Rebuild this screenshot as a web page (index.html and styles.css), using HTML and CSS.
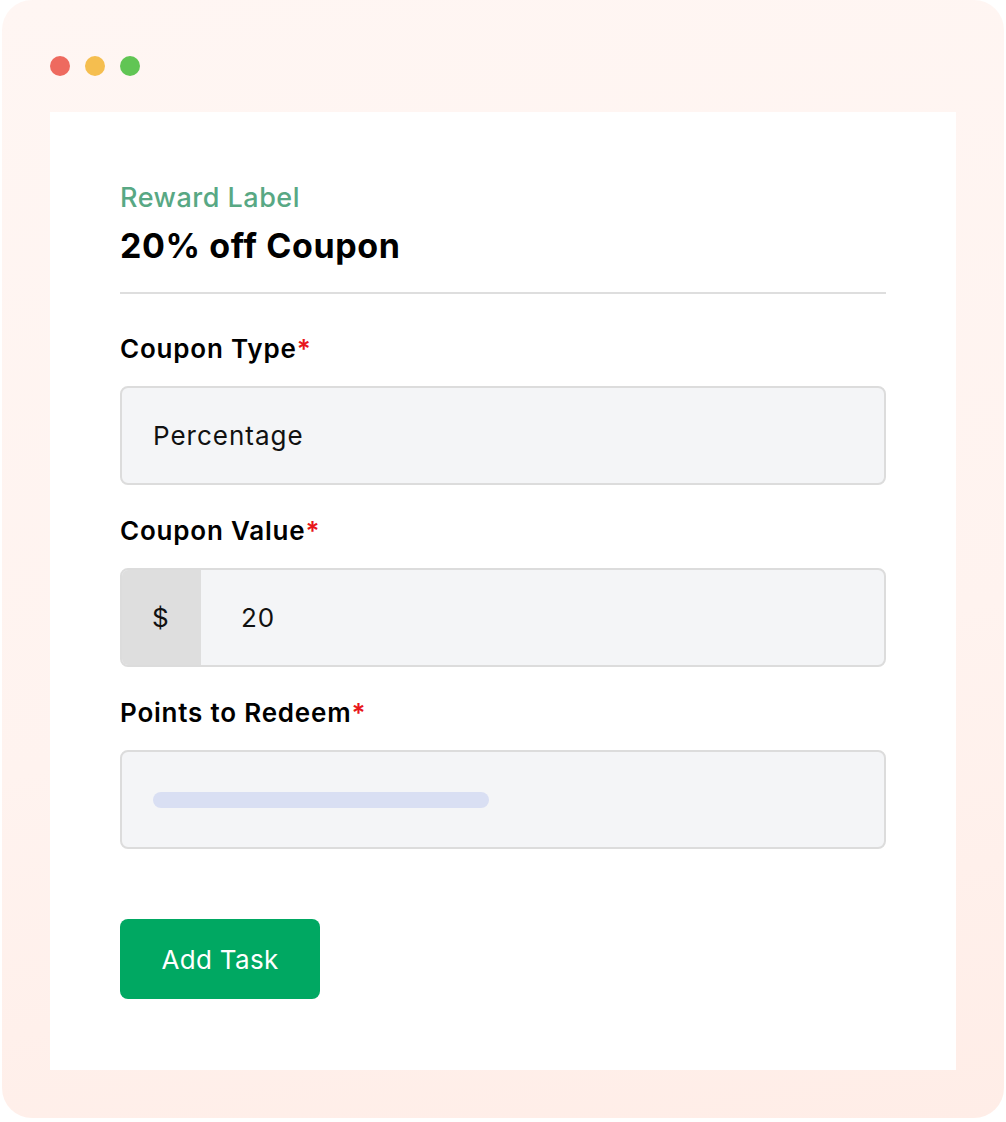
FILE: index.html
```html
<!DOCTYPE html>
<html lang="en">
    <head>
        <meta charset="UTF-8">
        <meta name="viewport" content="width=device-width, initial-scale=1.0">
        <title>Reward Coupon</title>
        <link rel="stylesheet" href="styles.css">
    </head>
    <body>
        <div class="frame">
            <div class="dots">
                <span class="dot red"></span>
                <span class="dot yellow"></span>
                <span class="dot green"></span>
            </div>
            <div class="panel">
                <div class="reward">
                    <p class="reward-label">Reward Label</p>
                    <h2 class="reward-title">20% off Coupon</h2>
                </div>

                <div class="field">
                    <label class="field-label">Coupon Type<span class="req">*</span></label>
                    <div class="input">
                        <span class="input-text">Percentage</span>
                    </div>
                </div>

                <div class="field">
                    <label class="field-label">Coupon Value<span class="req">*</span></label>
                    <div class="input input-prefixed">
                        <span class="prefix">$</span>
                        <span class="input-text value">20</span>
                    </div>
                </div>

                <div class="field">
                    <label class="field-label">Points to Redeem<span class="req">*</span></label>
                    <div class="input">
                        <span class="placeholder-bar"></span>
                    </div>
                </div>

                <button class="btn">Add Task</button>
            </div>
        </div>
    </body>
</html>
```

FILE: styles.css
```css
* {
    margin: 0;
    padding: 0;
    box-sizing: border-box;
}

body {
    font-family: Inter, 'Noto Sans', sans-serif;
    background: white;
    color: #111;
}

.frame {
    width: 1002px;
    height: 1118px;
    margin-left: 2px;
    padding: 56px 48px 48px;
    border-radius: 30px;
    background: linear-gradient(170deg, #fff6f3 0%, #fff3ef 60%, #ffede7 100%);
    display: flex;
    flex-direction: column;
}

.dots {
    display: flex;
    gap: 15px;
    height: 20px;
    margin-bottom: 36px;
}

.dot {
    width: 20px;
    height: 20px;
    border-radius: 50%;
}

.red { background: #ee6a5f; }
.yellow { background: #f5be4f; }
.green { background: #61c554; }

.panel {
    flex: 1;
    background: white;
    padding: 70px 70px 0;
}

.reward {
    border-bottom: 2px solid #dedede;
    padding-bottom: 26px;
    margin-bottom: 39px;
}

.reward-label {
    color: #58a884;
    font-size: 27px;
    font-weight: 500;
    line-height: 32px;
    letter-spacing: 0.5px;
    margin-bottom: 12px;
}

.reward-title {
    font-size: 34px;
    font-weight: 700;
    line-height: 40px;
    letter-spacing: 0.6px;
    color: #000;
}

.field {
    margin-bottom: 30px;
}

.field-label {
    display: block;
    font-size: 26px;
    font-weight: 600;
    line-height: 32px;
    letter-spacing: 0.8px;
    margin-bottom: 21px;
    color: #000;
}

.req {
    color: #e8161b;
}

.input {
    height: 99px;
    border: 2px solid #dcdcdc;
    border-radius: 8px;
    background: #f4f5f7;
    display: flex;
    align-items: center;
    padding-left: 31px;
    overflow: hidden;
}

.input-text {
    font-size: 26px;
    letter-spacing: 1px;
    color: #111;
}

.input-prefixed {
    padding-left: 0;
}

.prefix {
    width: 79px;
    height: 100%;
    background: #dedede;
    display: flex;
    align-items: center;
    padding-left: 30px;
    font-size: 26px;
    margin-right: 40px;
}

.placeholder-bar {
    width: 336px;
    height: 16px;
    border-radius: 8px;
    background: #d9dff3;
}

.btn {
    margin-top: 40px;
    width: 200px;
    height: 80px;
    border: none;
    border-radius: 8px;
    background: #00a862;
    color: white;
    font-family: inherit;
    font-size: 26px;
    font-weight: 400;
    letter-spacing: 0.3px;
}
```
